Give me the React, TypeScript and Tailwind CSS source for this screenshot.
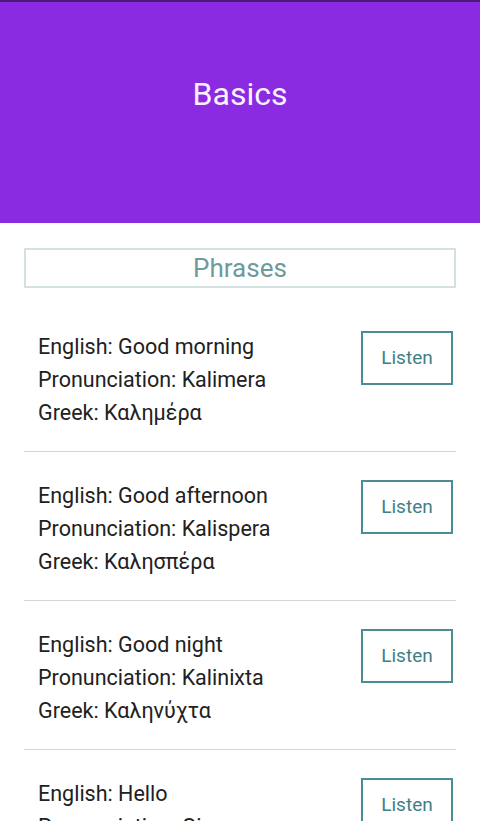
import React from 'react';

const phrases = [
  { english: 'Good morning', pron: 'Kalimera', greek: 'Καλημέρα' },
  { english: 'Good afternoon', pron: 'Kalispera', greek: 'Καλησπέρα' },
  { english: 'Good night', pron: 'Kalinixta', greek: 'Καληνύχτα' },
  { english: 'Hello', pron: 'Gia sou', greek: 'Γεια σου' },
];

const App: React.FC = () => (
  <div className="w-[480px] h-[821px] overflow-hidden bg-white font-['Roboto',sans-serif]">
    <header className="h-[223px] bg-[#8a2be2] border-t-2 border-[#4a1a7a] flex justify-center pt-[73px]">
      <h1 className="text-[32px] leading-[38px] text-[#fdf0ff]">Basics</h1>
    </header>
    <div className="px-6 pt-[25px]">
      <div className="h-10 border-2 border-[#d3e1e3] flex items-center justify-center">
        <span className="text-[26px] text-[#6f9a9c]">Phrases</span>
      </div>
      <ul className="mt-[15px]">
        {phrases.map((p) => (
          <li key={p.english} className="border-b border-[#d6d6d6] pt-[27px] pb-[22px] flex justify-between">
            <div className="pl-[14px] text-[21.5px] leading-[33px] text-[#212121]">
              <p>English: {p.english}</p>
              <p>Pronunciation: {p.pron}</p>
              <p>Greek: {p.greek}</p>
            </div>
            <button className="w-[92px] h-[54px] mr-[3px] border-2 border-[#4e8c93] text-[19px] text-[#3f8086] mt-px">
              Listen
            </button>
          </li>
        ))}
      </ul>
    </div>
  </div>
);

export default App;
